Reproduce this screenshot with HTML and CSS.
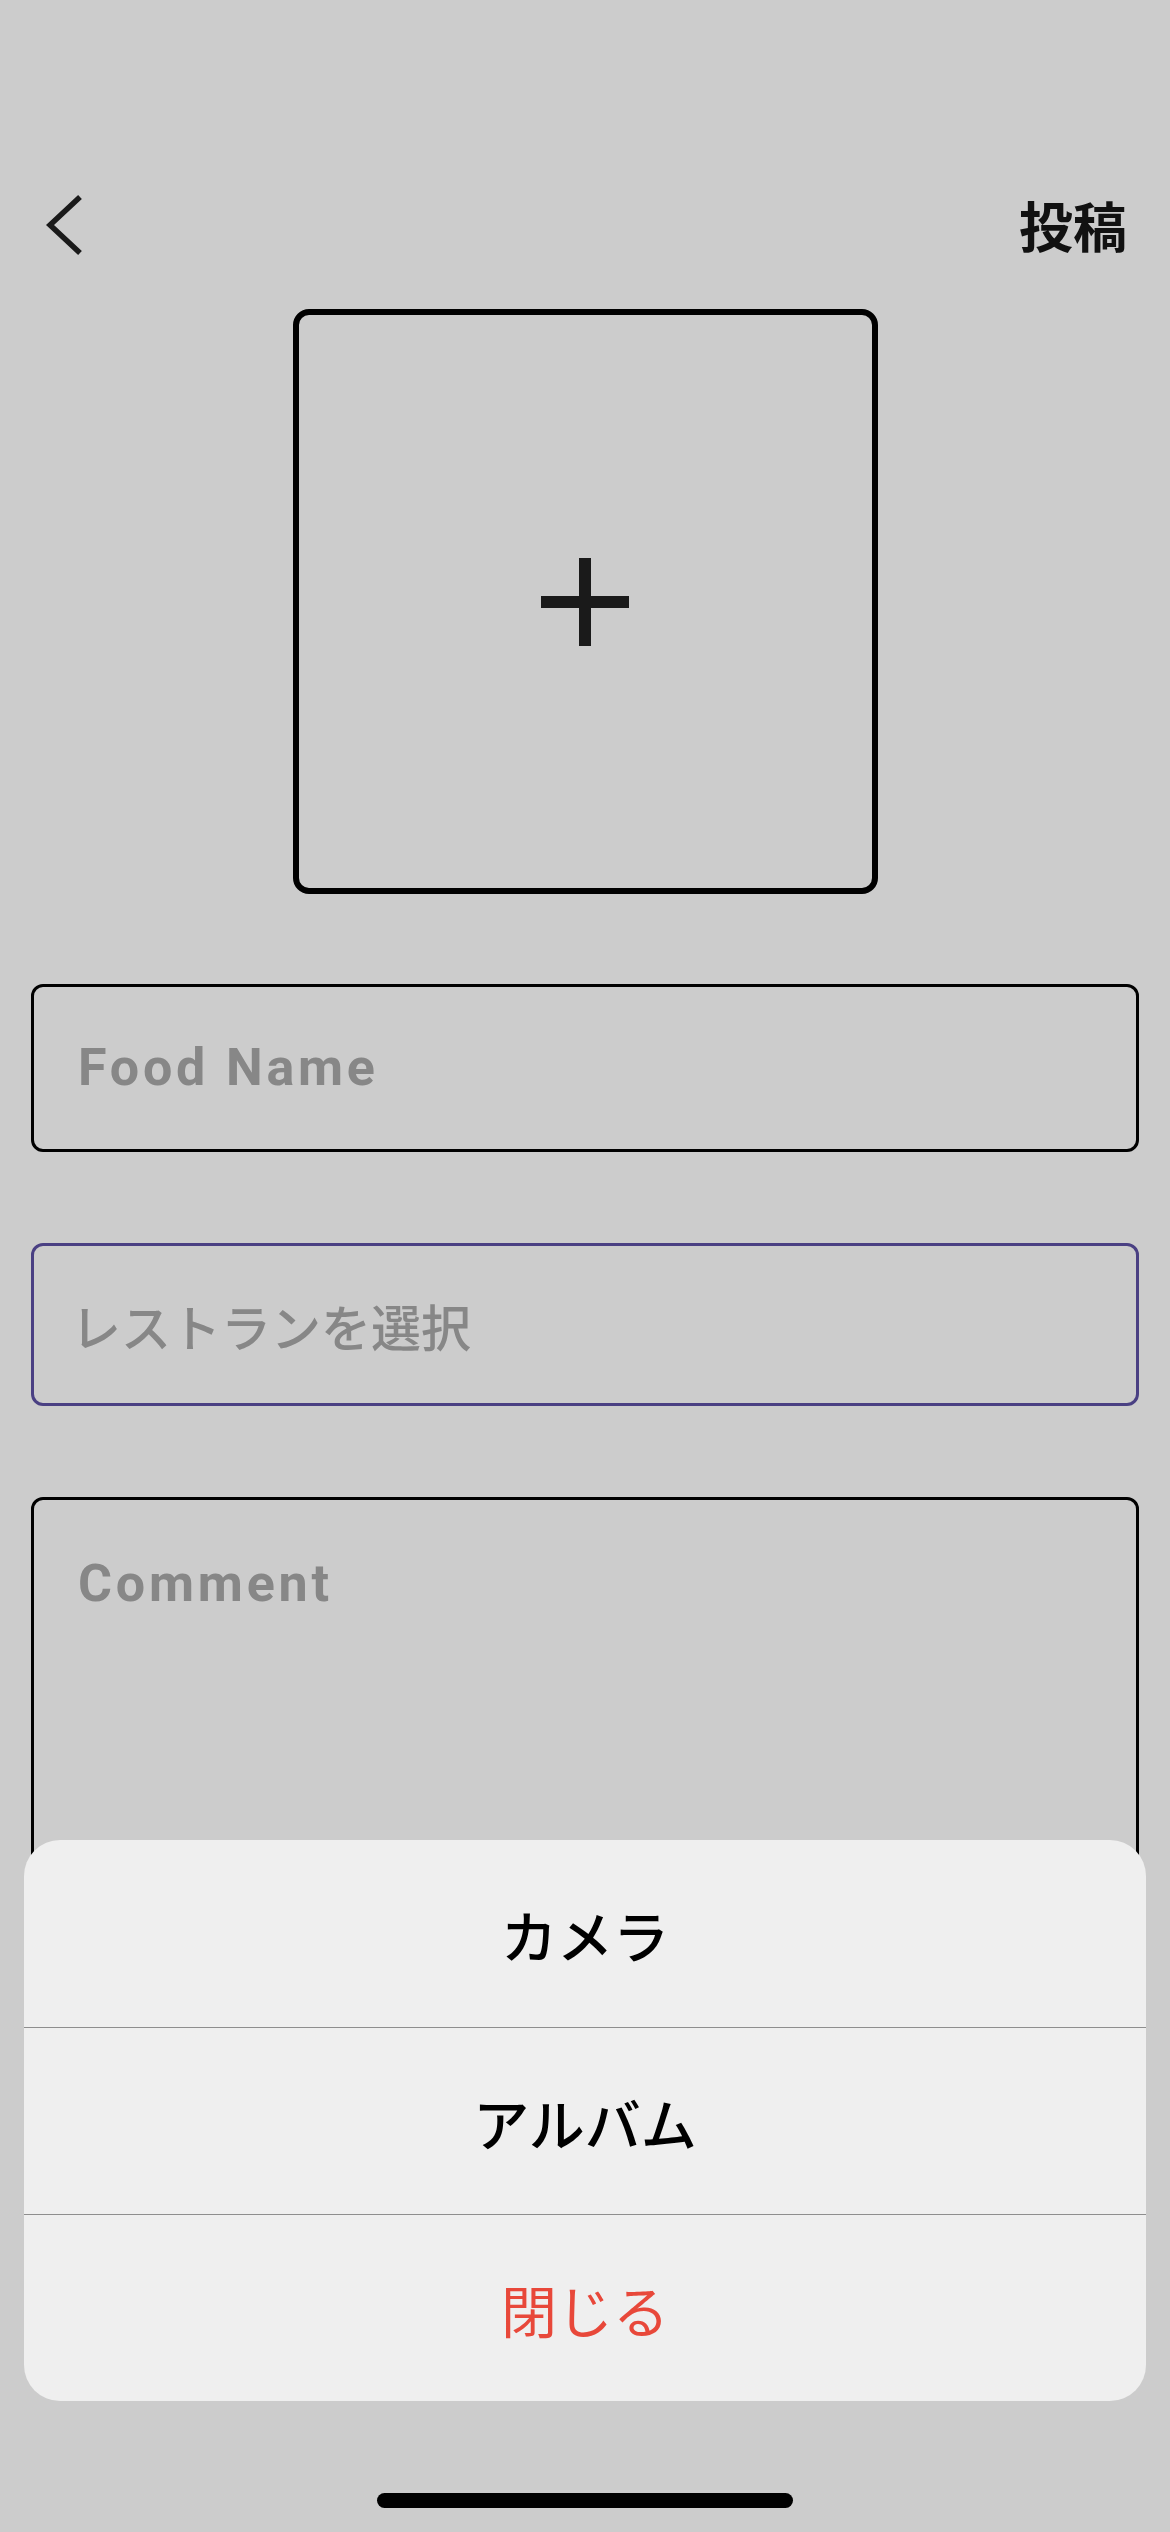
FILE: index.html
```html
<!DOCTYPE html>
<html lang="ja">
<head>
<meta charset="utf-8">
<title>投稿</title>
<link rel="stylesheet" href="styles.css">
</head>
<body>
<div class="screen">
  <header class="nav">
    <svg class="back" width="38" height="62" viewBox="0 0 38 62" aria-label="戻る">
      <polyline points="34,3 4,31 34,59" fill="none" stroke="#1a1a1a" stroke-width="5.5" stroke-linejoin="miter" stroke-linecap="butt"/>
    </svg>
    <span class="post">投稿</span>
  </header>

  <div class="photo">
    <svg width="88" height="88" viewBox="0 0 88 88" aria-label="写真を追加">
      <rect x="0" y="38" width="88" height="12" fill="#1a1a1a"/>
      <rect x="38" y="0" width="12" height="88" fill="#1a1a1a"/>
    </svg>
  </div>

  <div class="form">
    <div class="field field-name"><span class="ph ph-latin">Food Name</span></div>
    <div class="field field-rest"><span class="ph ph-jp">レストランを選択</span></div>
    <div class="field field-comment"><span class="ph ph-latin">Comment</span></div>
  </div>

  <div class="sheet">
    <div class="sheet-row">カメラ</div>
    <div class="sheet-row">アルバム</div>
    <div class="sheet-row close">閉じる</div>
  </div>

  <div class="home-indicator"></div>
</div>
</body>
</html>
```
FILE: styles.css
```css
html, body {
  margin: 0;
  padding: 0;
}
body {
  background: #cccccc;
  font-family: "Noto Sans CJK JP", "Noto Sans", sans-serif;
}
.screen {
  position: relative;
  width: 1170px;
  height: 2532px;
  overflow: hidden;
  padding-top: 175px;
  box-sizing: border-box;
}
.nav {
  height: 100px;
  display: flex;
  align-items: center;
  justify-content: space-between;
  padding: 0 43px 0 46px;
}
.back {
  display: block;
}
.post {
  font-family: "Noto Sans CJK JP", sans-serif;
  font-weight: 700;
  font-size: 54px;
  line-height: 1;
  color: #111;
}
.photo {
  width: 585px;
  height: 585px;
  box-sizing: border-box;
  margin: 34px auto 0;
  border: 6px solid #000;
  border-radius: 16px;
  display: flex;
  align-items: center;
  justify-content: center;
}
.photo svg {
  display: block;
}
.form {
  display: flex;
  flex-direction: column;
  gap: 91px;
  margin: 90px 31px 0;
}
.field {
  box-sizing: border-box;
  border: 3px solid #000;
  border-radius: 12px;
  display: flex;
  align-items: center;
}
.field-name {
  height: 168px;
  padding-left: 44px;
}
.field-rest {
  height: 163px;
  padding-left: 37px;
  border-color: #4a4083;
}
.field-comment {
  height: 520px;
  align-items: flex-start;
  padding: 54px 0 0 44px;
}
.ph {
  color: #878787;
}
.ph-latin {
  font-family: Roboto, "Liberation Sans", sans-serif;
  font-weight: 700;
  font-size: 52px;
  letter-spacing: 3.8px;
  line-height: 60px;
}
.ph-jp {
  font-family: "Noto Sans CJK JP", sans-serif;
  font-weight: 500;
  font-size: 50px;
  line-height: 60px;
}
.sheet {
  position: absolute;
  left: 24px;
  top: 1840px;
  width: 1122px;
  background: #efefef;
  border-radius: 36px;
  overflow: hidden;
  display: flex;
  flex-direction: column;
}
.sheet-row {
  height: 186px;
  display: flex;
  align-items: center;
  justify-content: center;
  font-size: 56px;
  font-weight: 500;
  color: #000;
  border-top: 1.5px solid #8e8e8e;
}
.sheet-row:first-child {
  border-top: none;
  height: 187px;
}
.sheet-row.close {
  color: #e8483a;
  font-weight: 400;
}
.home-indicator {
  position: absolute;
  left: 377px;
  top: 2493px;
  width: 416px;
  height: 15px;
  border-radius: 8px;
  background: #000;
}
```
